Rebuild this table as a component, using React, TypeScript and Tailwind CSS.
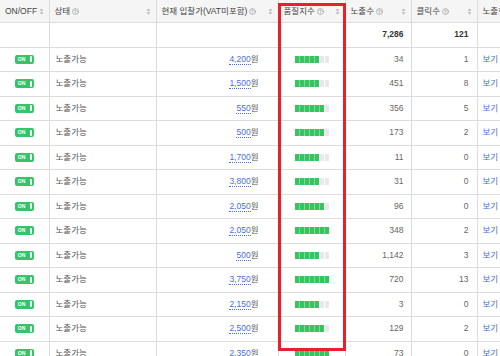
import React from "react"
import { CircleHelp } from "lucide-react"

type Row = { bid: string; quality: number; imp: string; click: string }

const rows: Row[] = [
  { bid: "4,200", quality: 5, imp: "34", click: "1" },
  { bid: "1,500", quality: 5, imp: "451", click: "8" },
  { bid: "550", quality: 6, imp: "356", click: "5" },
  { bid: "500", quality: 6, imp: "173", click: "2" },
  { bid: "1,700", quality: 5, imp: "11", click: "0" },
  { bid: "3,800", quality: 5, imp: "31", click: "0" },
  { bid: "2,050", quality: 6, imp: "96", click: "0" },
  { bid: "2,050", quality: 7, imp: "348", click: "2" },
  { bid: "500", quality: 5, imp: "1,142", click: "3" },
  { bid: "3,750", quality: 7, imp: "720", click: "13" },
  { bid: "2,150", quality: 5, imp: "3", click: "0" },
  { bid: "2,500", quality: 6, imp: "129", click: "2" },
  { bid: "2,350", quality: 7, imp: "73", click: "0" },
]

function SortIcon() {
  return (
    <svg width="5" height="7" viewBox="0 0 5 7" className="shrink-0">
      <path d="M2.5 0.5 L4.5 2.8 L0.5 2.8 Z" fill="#b5b5b5" />
      <path d="M2.5 6.5 L4.5 4.2 L0.5 4.2 Z" fill="#b5b5b5" />
    </svg>
  )
}

function HeadCell({ label, help, width }: { label: string; help?: boolean; width: string }) {
  return (
    <th className={`${width} border-r border-[#dcdcdc] px-[5px] pt-[2px] font-normal text-left`}>
      <div className="flex items-center justify-between">
        <span className="flex items-center gap-[2px] whitespace-nowrap">
          {label}
          {help && <CircleHelp size={7} strokeWidth={2} className="text-[#888]" />}
        </span>
        <SortIcon />
      </div>
    </th>
  )
}

function Toggle() {
  return (
    <div className="mx-auto flex h-[9px] w-[19px] items-center justify-between rounded-[2px] bg-[#35c46a] pl-[3px] pr-[2px]">
      <span className="text-[5px] font-bold leading-none text-white">ON</span>
      <span className="h-[6px] w-[2px] rounded-full bg-white" />
    </div>
  )
}

function Quality({ level }: { level: number }) {
  return (
    <div className="mx-auto flex h-[7px] w-[34px]">
      {Array.from({ length: 7 }).map((_, i) => (
        <span
          key={i}
          className={`flex-1 ${
            i < level
              ? `bg-[#35c460] ${i > 0 ? "border-l border-[#7fd897]" : ""}`
              : "border-l border-white bg-[#e8e8e8]"
          }`}
        />
      ))}
    </div>
  )
}

export default function App() {
  return (
    <div
      className="relative h-[356px] w-[500px] overflow-hidden bg-white text-[8.5px] text-[#555]"
      style={{ fontFamily: '"Liberation Sans", "Noto Sans CJK KR", sans-serif' }}
    >
      <table className="w-[560px] table-fixed border-collapse">
        <thead>
          <tr className="h-[22px] border-b border-[#dcdcdc] bg-[#f5f5f5] text-[#444]">
            <HeadCell label="ON/OFF" width="w-[49px]" />
            <HeadCell label="상태" help width="w-[107px]" />
            <HeadCell label="현재 입찰가(VAT미포함)" help width="w-[122px]" />
            <HeadCell label="품질지수" help width="w-[67px]" />
            <HeadCell label="노출수" help width="w-[66px]" />
            <HeadCell label="클릭수" help width="w-[66px]" />
            <HeadCell label="노출현황" help width="w-[83px]" />
          </tr>
        </thead>
        <tbody>
          <tr className="h-[25px] border-b border-[#dcdcdc] font-bold text-[#333]">
            <td className="border-r border-[#dcdcdc]" />
            <td className="border-r border-[#dcdcdc]" />
            <td className="border-r border-[#dcdcdc]" />
            <td className="border-r border-[#dcdcdc]" />
            <td className="border-r border-[#dcdcdc] pr-[7px] text-right">7,286</td>
            <td className="border-r border-[#dcdcdc] pr-[8px] text-right">121</td>
            <td />
          </tr>
          {rows.map((r, i) => (
            <tr key={i} className="h-[24.5px] border-b border-[#dcdcdc]">
              <td className="border-r border-[#dcdcdc]">
                <Toggle />
              </td>
              <td className="border-r border-[#dcdcdc] pl-[6px]">노출가능</td>
              <td className="border-r border-[#dcdcdc] pr-[19px] text-right">
                <span className="border-b border-dotted border-[#4a6fd6] text-[#4a6fd6]">{r.bid}</span>원
              </td>
              <td className="border-r border-[#dcdcdc]">
                <Quality level={r.quality} />
              </td>
              <td className="border-r border-[#dcdcdc] pr-[7px] text-right text-[#666]">{r.imp}</td>
              <td className="border-r border-[#dcdcdc] pr-[8px] text-right text-[#666]">{r.click}</td>
              <td className="pl-[5px] text-[#4a6fd6]">보기</td>
            </tr>
          ))}
        </tbody>
      </table>
      <div className="absolute left-[278px] top-[3px] h-[348px] w-[68px] border-[3px] border-[#e8202b]" />
    </div>
  )
}
